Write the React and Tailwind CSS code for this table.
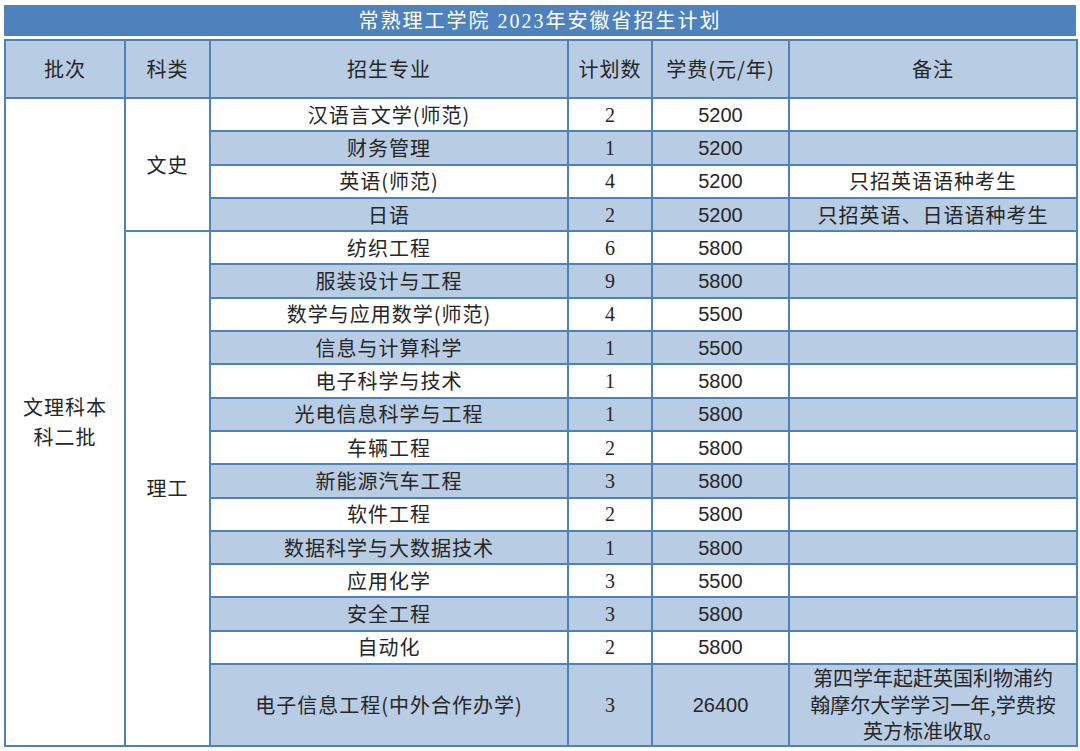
const wenshi = [
  ["汉语言文学(师范)", "2", "5200", ""],
  ["财务管理", "1", "5200", ""],
  ["英语(师范)", "4", "5200", "只招英语语种考生"],
  ["日语", "2", "5200", "只招英语、日语语种考生"],
];

const ligong = [
  ["纺织工程", "6", "5800", ""],
  ["服装设计与工程", "9", "5800", ""],
  ["数学与应用数学(师范)", "4", "5500", ""],
  ["信息与计算科学", "1", "5500", ""],
  ["电子科学与技术", "1", "5800", ""],
  ["光电信息科学与工程", "1", "5800", ""],
  ["车辆工程", "2", "5800", ""],
  ["新能源汽车工程", "3", "5800", ""],
  ["软件工程", "2", "5800", ""],
  ["数据科学与大数据技术", "1", "5800", ""],
  ["应用化学", "3", "5500", ""],
  ["安全工程", "3", "5800", ""],
  ["自动化", "2", "5800", ""],
];

const cjk = { fontFamily: '"Noto Sans CJK SC", sans-serif' };
const serif = { fontFamily: '"Liberation Serif", "Noto Sans CJK SC", serif' };
const sans = { fontFamily: '"Liberation Sans", "Noto Sans CJK SC", sans-serif' };

const cell = "border-2 border-[#4f81bd] text-center align-middle p-0";

const Row = ({ r, i, children }) => {
  const bg = i % 2 === 1 ? "bg-[#b8cce4]" : "bg-white";
  return (
    <tr className="h-[33.3px]">
      {children}
      <td className={`${cell} ${bg}`}>{r[0]}</td>
      <td className={`${cell} ${bg} tracking-normal`} style={serif}>
        {r[1]}
      </td>
      <td className={`${cell} ${bg} tracking-normal`} style={sans}>
        {r[2]}
      </td>
      <td className={`${cell} ${bg}`}>{r[3]}</td>
    </tr>
  );
};

export default function App() {
  return (
    <div
      className="bg-white w-[1080px] h-[751px] pt-[5px] pl-[4px] text-[20px] leading-[26px] tracking-[1px] text-[#262626]"
      style={cjk}
    >
      <div
        className="w-[1072px] h-[31px] bg-[#4f81bd] text-white text-[20px] tracking-[2px] flex items-center justify-center"
        style={serif}
      >
        常熟理工学院 2023年安徽省招生计划
      </div>
      <div className="h-[3px]" />
      <table className="w-[1072px] table-fixed border-collapse">
        <colgroup>
          <col className="w-[120px]" />
          <col className="w-[85px]" />
          <col className="w-[358px]" />
          <col className="w-[84px]" />
          <col className="w-[137px]" />
          <col className="w-[288px]" />
        </colgroup>
        <thead>
          <tr className="h-[58px] bg-[#b8cce4]">
            <td className={cell}>批次</td>
            <td className={cell}>科类</td>
            <td className={cell}>招生专业</td>
            <td className={cell}>计划数</td>
            <td className={cell}>学费(元/年)</td>
            <td className={cell}>备注</td>
          </tr>
        </thead>
        <tbody>
          {wenshi.map((r, i) => (
            <Row key={r[0]} r={r} i={i}>
              {i === 0 && (
                <>
                  <td rowSpan={18} className={`${cell} bg-white px-[14px] leading-[30px]`}>
                    文理科本科二批
                  </td>
                  <td rowSpan={4} className={`${cell} bg-white`}>
                    文史
                  </td>
                </>
              )}
            </Row>
          ))}
          {ligong.map((r, i) => (
            <Row key={r[0]} r={r} i={i}>
              {i === 0 && (
                <td rowSpan={14} className={`${cell} bg-white`}>
                  理工
                </td>
              )}
            </Row>
          ))}
          <tr className="h-[81px] bg-[#b8cce4]">
            <td className={cell}>电子信息工程(中外合作办学)</td>
            <td className={`${cell} tracking-normal`} style={serif}>
              3
            </td>
            <td className={`${cell} tracking-normal`} style={sans}>
              26400
            </td>
            <td className={`${cell} tracking-normal whitespace-nowrap leading-[26.5px]`}>
              第四学年起赶英国利物浦约
              <br />
              翰摩尔大学学习一年,学费按
              <br />
              英方标准收取。
            </td>
          </tr>
        </tbody>
      </table>
    </div>
  );
}
